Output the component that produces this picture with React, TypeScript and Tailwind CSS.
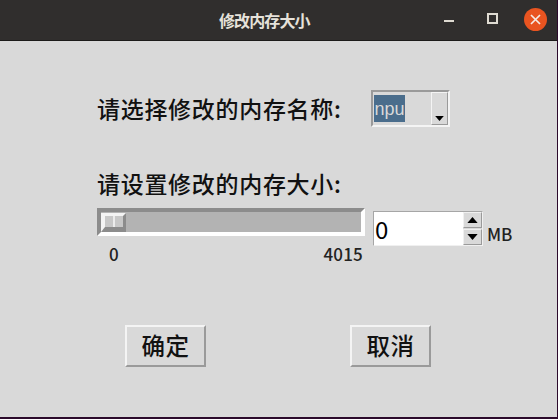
import React from "react";

const cjk = "font-['Noto_Sans_CJK_SC','Noto_Sans',sans-serif]";

function Triangle({ up, className }: { up?: boolean; className?: string }) {
  return (
    <svg width="12" height="7" viewBox="0 0 12 7" className={className}>
      <path d={up ? "M6 0 12 7H0Z" : "M0 0H12L6 7Z"} fill="#000" />
    </svg>
  );
}

function DialogButton({ label }: { label: string }) {
  return (
    <button className="flex h-[42px] w-[81px] items-center justify-center border-[2px] border-t-[#f4f4f4] border-l-[#f4f4f4] border-r-[#9a9a9a] border-b-[#9a9a9a] bg-[#d9d9d9] text-[23.5px] font-medium tracking-[0.6px] text-[#111]">
      {label}
    </button>
  );
}

export default function App() {
  return (
    <div className={`flex h-[419px] w-[558px] flex-col overflow-hidden bg-[#2c0a2c] ${cjk}`}>
      <div className="mr-px flex h-[417px] flex-col">
        {/* Title bar */}
        <div className="flex h-[41px] shrink-0 items-center border-b border-[#1c1b1a] bg-[#302e2d]">
          <div className="ml-[219px] w-[225px] text-[16px] font-bold leading-none tracking-[-0.9px] text-[#e6e2da]">
            修改内存大小
          </div>
          <div className="h-[2px] w-[10px] translate-y-px bg-[#dfdbd2]" />
          <div className="ml-[33px] h-[11px] w-[11px] -translate-y-[2px] border-2 border-[#dfdbd2]" />
          <div className="ml-[26px] flex h-[23px] w-[23px] -translate-y-px items-center justify-center rounded-full bg-[#e95420]">
            <svg width="11" height="11" viewBox="0 0 11 11">
              <path d="M1 1 10 10M10 1 1 10" stroke="#f5ece6" strokeWidth="1.7" />
            </svg>
          </div>
        </div>

        <div className="flex flex-1 flex-col bg-[#d9d9d9] pl-[97px]">
          {/* Memory name */}
          <div className="mt-[49px] flex h-[37px] items-center">
            <span className="w-[275px] text-[23px] font-medium leading-none tracking-[0.7px] text-[#111]">
              请选择修改的内存名称:
            </span>
            <div className="-ml-px flex h-[37px] w-[79px] items-stretch border-[2px] border-t-[#9a9a9a] border-l-[#9a9a9a] border-r-[#f4f4f4] border-b-[#f4f4f4] bg-[#d9d9d9]">
              <span className="mx-px my-[3px] flex w-[31px] items-center justify-center bg-[#4a6d8c] font-['Liberation_Sans',sans-serif] text-[18px] leading-none text-[#d9d9d9]">
                npu
              </span>
              <div className="ml-auto flex w-[17px] items-end justify-center border border-t-[#f4f4f4] border-l-[#f4f4f4] border-r-[#9a9a9a] border-b-[#9a9a9a] pb-[3px]">
                <Triangle className="h-[5px] w-[9px]" />
              </div>
            </div>
          </div>

          {/* Memory size */}
          <div className="mt-[43px] text-[23px] font-medium leading-[27px] tracking-[0.7px] text-[#111]">
            请设置修改的内存大小:
          </div>
          <div className="mt-[11px] flex items-start">
            <div className="w-[268px]">
              <div className="flex h-[28px] items-center border-[4px] border-t-[#8c8c8c] border-l-[#8c8c8c] border-r-white border-b-white bg-[#b3b3b3]">
                <div className="flex h-[19px] w-[25px] items-stretch gap-[2px] border-t-[3px] border-r-[3px] border-b-[5px] border-l-[4px] border-t-[#f4f4f4] border-l-[#f4f4f4] border-r-[#8c8c8c] border-b-[#8c8c8c] bg-[#ececec]">
                  <div className="w-[8px] bg-[#c8c8c8]" />
                  <div className="w-[8px] bg-[#c8c8c8]" />
                </div>
              </div>
              <div className="mt-[6px] flex justify-between pl-[12px] pr-[2px] text-[17px] font-medium leading-[23px] text-[#222]">
                <span>0</span>
                <span className="tracking-[0.2px]">4015</span>
              </div>
            </div>
            <div className="ml-[8px] mt-[3px] flex h-[35px] w-[110px] border-[1px] border-t-[#a6a6a6] border-l-[#a6a6a6] border-r-[#f0f0f0] border-b-[#f0f0f0] bg-white">
              <span className="flex-1 pl-px text-[24px] leading-[33px] text-black">0</span>
              <div className="flex w-[19px] flex-col gap-px bg-[#d9d9d9]">
                <div className="flex h-[16px] items-center justify-center border border-[#f0f0f0] border-r-[#9a9a9a] border-b-[#9a9a9a]">
                  <Triangle up className="h-[6px] w-[11px]" />
                </div>
                <div className="flex h-[16px] items-center justify-center border border-[#f0f0f0] border-r-[#9a9a9a] border-b-[#9a9a9a]">
                  <Triangle className="h-[6px] w-[11px]" />
                </div>
              </div>
            </div>
            <span className="ml-[4px] mt-[14px] text-[17px] font-medium leading-[23px] text-[#222]">MB</span>
          </div>

          {/* Actions */}
          <div className="mt-[60px] flex gap-[144px] pl-[28px]">
            <DialogButton label="确定" />
            <DialogButton label="取消" />
          </div>
        </div>
      </div>
    </div>
  );
}
